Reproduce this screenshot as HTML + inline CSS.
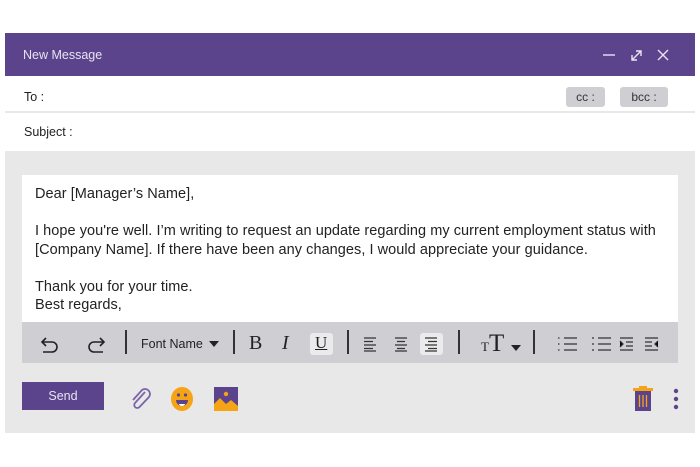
<!DOCTYPE html>
<html><head><style>
*{margin:0;padding:0;box-sizing:border-box}
body{width:700px;height:467px;background:#fff;font-family:"Liberation Sans",sans-serif;position:relative;overflow:hidden}
.a{position:absolute}
.win{left:5px;top:33px;width:690px;height:400px;background:#e8e8e8}
.hdr{left:5px;top:33px;width:690px;height:43px;background:#5c448c;color:#e8e4f0;font-size:12.5px}
.row{left:5px;width:690px;background:#fff;font-size:12.5px;color:#222}
.pill{background:#cfced3;border-radius:3px;font-size:12px;color:#333;text-align:center;line-height:20px;height:20px}
.ed{left:22px;top:175px;width:656px;height:147px;background:#fff;font-size:14.5px;color:#222;padding:10px 0 0 13px;line-height:18.5px;letter-spacing:0.05px}
.tb{left:22px;top:322px;width:656px;height:41px;background:#cfced3}
.sep{width:1.5px;height:24px;background:#333;top:330px}
</style></head><body>
<div class="a win"></div>
<div class="a hdr"><span class="a" style="left:18px;top:15px">New Message</span>
<svg class="a" style="left:590px;top:12px" width="85" height="20" stroke="#e8e4f0" stroke-width="1.4" fill="none">
<line x1="8" y1="10" x2="20" y2="10"/>
<path d="M37 15 L46 6 M41 6 H46 V11 M37 10 V15 H42"/>
<path d="M63 5 L73 15 M73 5 L63 15"/>
</svg></div>
<div class="a row" style="top:76px;height:35px"><span class="a" style="left:19px;top:14px">To :</span>
<div class="a pill" style="left:561px;top:11px;width:39px">cc :</div>
<div class="a pill" style="left:615px;top:11px;width:48px">bcc :</div></div>
<div class="a row" style="top:113px;height:38px"><span class="a" style="left:19px;top:12px">Subject :</span></div>
<div class="a ed">Dear [Manager’s Name],<br><br>I hope you're well. I’m writing to request an update regarding my current employment status with [Company Name]. If there have been any changes, I would appreciate your guidance.<br><br>Thank you for your time.<br>Best regards,</div>
<div class="a tb"></div>
<svg class="a" style="left:38px;top:332px" width="70" height="22" fill="none" stroke="#222" stroke-width="1.6">
<path d="M8 6 L4 10 L8 14 M4 10 H14 A5 5 0 0 1 14 20 H5"/>
<path d="M62 6 L66 10 L62 14 M66 10 H56 A5 5 0 0 0 56 20 H65"/>
</svg>
<div class="a sep" style="left:125px"></div>
<span class="a" style="left:141px;top:337px;font-size:12.5px;color:#222">Font Name</span>
<svg class="a" style="left:209px;top:341px" width="10" height="6"><path d="M0 0H10L5 6Z" fill="#222"/></svg>
<div class="a sep" style="left:233px"></div>
<span class="a" style="left:249px;top:332px;font-family:'Liberation Serif',serif;font-size:20px;color:#222">B</span>
<span class="a" style="left:282px;top:332px;font-family:'Liberation Serif',serif;font-size:20px;font-style:italic;color:#222">I</span>
<div class="a" style="left:310px;top:333px;width:23px;height:22px;background:#ebebed;border-radius:3px"></div>
<span class="a" style="left:315px;top:333px;font-family:'Liberation Serif',serif;font-size:17px;color:#222;text-decoration:underline">U</span>
<div class="a sep" style="left:347px"></div>
<div class="a" style="left:420px;top:333px;width:23px;height:22px;background:#ebebed;border-radius:3px"></div>
<svg class="a" style="left:362px;top:336px" width="80" height="16" stroke="#333" stroke-width="1.2">
<path d="M2 2H14M2 5.5H11M2 9H14M2 12.5H11M2 15H14"/>
<path d="M33 2H45M35 5.5H43M33 9H45M35 12.5H43M33 15H45"/>
<path d="M63 2H75M66 5.5H75M63 9H75M66 12.5H75M63 15H75"/>
</svg>
<div class="a sep" style="left:458px"></div>
<span class="a" style="left:481px;top:330px;font-family:'Liberation Serif',serif;color:#222"><span style="font-size:13px">T</span><span style="font-size:25px">T</span></span>
<svg class="a" style="left:511px;top:345px" width="10" height="6"><path d="M0 0H10L5 6Z" fill="#222"/></svg>
<div class="a sep" style="left:533px"></div>
<svg class="a" style="left:555px;top:335px" width="110" height="18" stroke="#333" stroke-width="1.3">
<path d="M9 3H22M9 9H22M9 15H22M3 3H4.5M3 9H4.5M3 15H4.5"/>
<path d="M43 3H56M43 9H56M43 15H56M37 3H39M37 9H39M37 15H39"/>
<path d="M65 3H78M71 7H78M71 11H78M65 15H78M65 6L68 9L65 12"/>
<path d="M90 3H103M90 7H97M90 11H97M90 15H103M103 6L100 9L103 12"/>
</svg>
<div class="a" style="left:22px;top:382px;width:82px;height:28px;background:#5c448c;color:#e8e4f0;font-size:12.5px;text-align:center;line-height:28px">Send</div>
<svg class="a" style="left:128px;top:386px" width="26" height="26" fill="none" stroke="#7b64a8" stroke-width="1.8">
<path d="M17 6 L7 17 A3 3 0 0 0 11.5 21 L21 11 A5 5 0 0 0 14 4 L5 14"/>
</svg>
<svg class="a" style="left:169px;top:386px" width="26" height="26">
<ellipse cx="13" cy="13" rx="11" ry="12" fill="#f5a416"/>
<circle cx="9.5" cy="9" r="1.6" fill="#5c448c"/><circle cx="16.5" cy="9" r="1.6" fill="#5c448c"/>
<path d="M7 14 H19 A6 6 0 0 1 7 14Z" fill="#5c448c"/>
<path d="M10 18 H16 A3 2 0 0 1 10 18Z" fill="#fff"/>
</svg>
<svg class="a" style="left:214px;top:387px" width="24" height="24">
<rect width="24" height="24" fill="#5c448c"/>
<circle cx="12" cy="7" r="2.2" fill="#f5a416"/>
<path d="M0 24 V17 L6 11 L12 17 L17 13 L24 19 V24Z" fill="#f5a416"/>
</svg>
<svg class="a" style="left:630px;top:386px" width="26" height="26">
<rect x="3" y="2" width="20" height="3" fill="#f5a416"/><rect x="9" y="0" width="8" height="3" fill="#f5a416"/>
<rect x="5" y="5" width="16" height="20" fill="#5c448c"/>
<path d="M9.5 9V21M13 9V21M16.5 9V21" stroke="#f5a416" stroke-width="1.3"/>
</svg>
<svg class="a" style="left:672px;top:387px" width="8" height="24" fill="#5c448c">
<circle cx="4" cy="4" r="2.2"/><circle cx="4" cy="12" r="2.2"/><circle cx="4" cy="20" r="2.2"/>
</svg>
</body></html>
